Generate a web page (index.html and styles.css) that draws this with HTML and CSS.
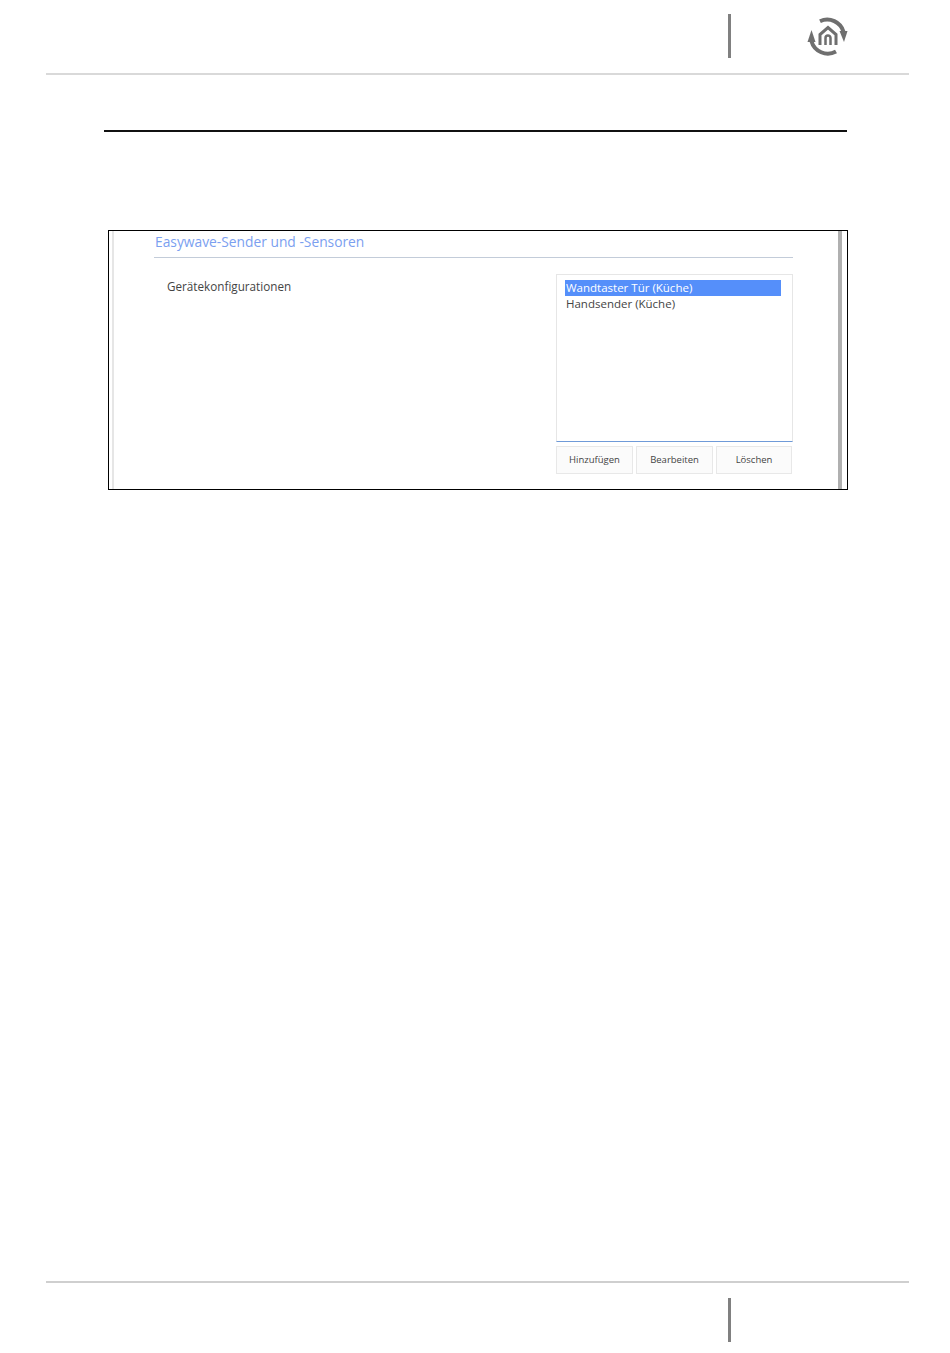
FILE: index.html
```html
<!DOCTYPE html>
<html lang="de">
<head>
    <meta charset="UTF-8">
    <meta name="viewport" content="width=device-width, initial-scale=1.0">
    <title>Easywave-Sender und -Sensoren</title>
    <link rel="stylesheet" href="styles.css">
</head>
<body>
    <header class="page-header">
        <div class="page-bar"></div>
        <svg class="logo" viewBox="0 0 42 41" width="42" height="41">
            <path class="logo-line" d="M13 5.2 A17 17 0 0 1 36.6 16"/>
            <path class="logo-line" d="M29 35.5 A17 17 0 0 1 4.4 25"/>
            <polygon class="logo-fill" points="32.5,15 40.5,15 37,26"/>
            <polygon class="logo-fill" points="0.5,26 8.5,26 4.5,14"/>
            <path class="logo-house" d="M13 29 V18.5 L21 11.5 L29 18.5 V29"/>
            <path class="logo-door" d="M18.5 29 V22 a2.5 2.5 0 0 1 5 0 V29"/>
        </svg>
    </header>

    <main class="content">
        <div class="black-rule"></div>

        <section class="shot">
            <div class="shot-inner">
                <h2 class="shot-title">Easywave-Sender und -Sensoren</h2>
                <div class="config-row">
                    <div class="config-label">Gerätekonfigurationen</div>
                    <div class="config-control">
                        <div class="device-list">
                            <div class="device selected">Wandtaster Tür (Küche)</div>
                            <div class="device">Handsender (Küche)</div>
                        </div>
                        <div class="button-row">
                            <button class="btn">Hinzufügen</button>
                            <button class="btn">Bearbeiten</button>
                            <button class="btn btn-last">Löschen</button>
                        </div>
                    </div>
                </div>
            </div>
        </section>
    </main>

    <footer class="page-footer">
        <div class="page-bar"></div>
    </footer>
</body>
</html>
```

FILE: styles.css
```css
* {
    box-sizing: border-box;
}
html, body {
    margin: 0;
    padding: 0;
}
body {
    width: 950px;
    height: 1353px;
    display: flex;
    flex-direction: column;
    background-color: #ffffff;
    font-family: "Open Sans", "Noto Sans", sans-serif;
    color: #444444;
}
.page-header {
    height: 75px;
    margin: 0 41px 0 46px;
    padding: 14px 0 0 682px;
    display: flex;
    align-items: flex-start;
    border-bottom: 2px solid #d9d9d9;
}
.page-bar {
    width: 3px;
    height: 44px;
    background-color: #808080;
}
.logo {
    margin: 2px 0 0 76px;
    overflow: visible;
}
.logo-line {
    fill: none;
    stroke: #6f6f6f;
    stroke-width: 4;
}
.logo-fill {
    fill: #6f6f6f;
}
.logo-house {
    fill: none;
    stroke: #6f6f6f;
    stroke-width: 3;
}
.logo-door {
    fill: none;
    stroke: #6f6f6f;
    stroke-width: 2.5;
}
.content {
    flex: 1;
    padding: 55px 103px 0 104px;
}
.black-rule {
    height: 2px;
    background-color: #111111;
}
.shot {
    height: 260px;
    margin: 98px -1px 0 4px;
    padding: 0 5px 0 3px;
    border: 1px solid #000000;
}
.shot-inner {
    height: 100%;
    padding: 0 45px 0 40px;
    border-left: 2px solid #e6e6e6;
    border-right: 4px solid #b0b0b0;
}
.shot-title {
    height: 27px;
    margin: 0;
    padding-left: 1px;
    font-size: 13.8px;
    font-weight: 400;
    line-height: 22px;
    color: #7ba0f0;
    border-bottom: 1px solid #c3ccd9;
}
.config-row {
    display: flex;
    justify-content: space-between;
    padding-top: 16px;
}
.config-label {
    padding: 4px 0 0 13px;
    font-size: 11.7px;
    line-height: 16px;
}
.config-control {
    width: 237px;
}
.device-list {
    height: 168px;
    padding: 5px 11px 0 8px;
    border: 1px solid #e6e6e6;
    border-bottom: 1px solid #6f9ad8;
    font-size: 11.5px;
    line-height: 16px;
}
.device {
    height: 16px;
    padding-left: 1px;
}
.device.selected {
    background-color: #558ffa;
    color: #ffffff;
}
.button-row {
    display: flex;
    gap: 3px;
    margin-top: 4px;
}
.btn {
    width: 77px;
    height: 28px;
    padding: 0 0 2px;
    border: 1px solid #e8e8e8;
    background-color: #fbfbfb;
    font-family: "Open Sans", "Noto Sans", sans-serif;
    font-size: 9.5px;
    color: #444444;
}
.btn-last {
    width: 76px;
}
.page-footer {
    height: 72px;
    margin: 0 41px 0 46px;
    padding: 15px 0 0 682px;
    border-top: 2px solid #cfcfcf;
}
```
